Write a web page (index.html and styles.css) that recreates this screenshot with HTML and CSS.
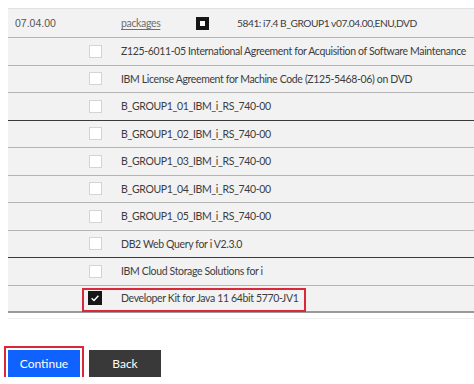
FILE: index.html
```html
<!DOCTYPE html>
<html lang="en">
<head>
<meta charset="utf-8">
<title>Packages</title>
<link rel="stylesheet" href="styles.css">
</head>
<body>
<div class="table">
  <div class="row head">
    <span class="ver">07.04.00</span>
    <a class="pkg" href="#">packages</a>
    <span class="box mixed"></span>
    <span class="desc">5841: i7.4 B_GROUP1 v07.04.00,ENU,DVD</span>
  </div>
  <div class="row item"><span></span><span class="box"></span><span class="label">Z125-6011-05 International Agreement for Acquisition of Software Maintenance</span></div>
  <div class="row item"><span></span><span class="box"></span><span class="label">IBM License Agreement for Machine Code (Z125-5468-06) on DVD</span></div>
  <div class="row item dark"><span></span><span class="box"></span><span class="label">B_GROUP1_01_IBM_i_RS_740-00</span></div>
  <div class="row item"><span></span><span class="box"></span><span class="label">B_GROUP1_02_IBM_i_RS_740-00</span></div>
  <div class="row item"><span></span><span class="box"></span><span class="label">B_GROUP1_03_IBM_i_RS_740-00</span></div>
  <div class="row item"><span></span><span class="box"></span><span class="label">B_GROUP1_04_IBM_i_RS_740-00</span></div>
  <div class="row item"><span></span><span class="box"></span><span class="label">B_GROUP1_05_IBM_i_RS_740-00</span></div>
  <div class="row item dark"><span></span><span class="box"></span><span class="label">DB2 Web Query for i V2.3.0</span></div>
  <div class="row item"><span></span><span class="box"></span><span class="label">IBM Cloud Storage Solutions for i</span></div>
  <div class="row item last">
    <span></span>
    <span class="box checked"><svg viewBox="0 0 14 14" width="14" height="14"><path d="M3.6 7.2 L6 9.4 L10.4 4.8" fill="none" stroke="#fff" stroke-width="1.4"/></svg></span>
    <span class="label">Developer Kit for Java 11 64bit 5770-JV1</span>
    <span class="callout"></span>
  </div>
  <div class="foot"></div>
</div>
<div class="actions">
  <button class="btn primary">Continue</button>
  <button class="btn secondary">Back</button>
</div>
</body>
</html>
```
FILE: styles.css
```css
html, body {
  margin: 0;
  padding: 0;
  background: #ffffff;
}
body {
  font-family: Lato, "Open Sans", sans-serif;
  font-size: 10.5px;
  letter-spacing: -0.35px;
  color: #393939;
}
.table {
  margin: 8px 0 0 8px;
  border-top: 1px solid #dfe3e6;
}
.row {
  display: grid;
  align-items: center;
  background: #f2f2f2;
  border-bottom: 1px solid #b4b4b4;
  position: relative;
}
.head {
  grid-template-columns: 113px 75px 41px 1fr;
  height: 28px;
}
.item {
  grid-template-columns: 81px 32px 1fr;
  height: 26.5px;
}
.item.dark {
  border-bottom-color: #3a3a3a;
}
.item.last {
  border-bottom: 2px solid #9a9a9a;
  height: 25.5px;
}
.ver {
  padding-left: 7px;
  font-family: "Liberation Sans", Arial, sans-serif;
  font-size: 10.5px;
  letter-spacing: 0;
  color: #555555;
}
.pkg {
  color: #6f6f6f;
  text-decoration: underline;
  text-underline-offset: 2px;
}
.desc {
  color: #3d3d3d;
  white-space: nowrap;
  font-size: 10.2px;
  letter-spacing: -0.45px;
}
.label {
  color: #3d3d3d;
  white-space: nowrap;
}
.box {
  width: 13px;
  height: 13px;
  box-sizing: border-box;
  background: #ffffff;
  border: 1px solid #d4d4d4;
  display: block;
}
.box.mixed {
  border: 4px solid #161616;
}
.box.checked {
  width: 14px;
  height: 14px;
  margin-left: -1px;
  background: #161616;
  border: none;
}
.box.checked svg {
  display: block;
}
.callout {
  position: absolute;
  left: 74px;
  top: 2px;
  width: 224px;
  height: 24px;
  box-sizing: border-box;
  border: 2px solid #d9283a;
  pointer-events: none;
}
.foot {
  height: 5px;
  border-bottom: 1px solid #efefef;
}
.actions {
  display: flex;
  gap: 9px;
  margin: 31px 0 0 8px;
}
.btn {
  font-family: Lato, "Open Sans", sans-serif;
  font-size: 12px;
  color: #ffffff;
  border: none;
  height: 27px;
  width: 72px;
  padding: 0;
  cursor: pointer;
}
.primary {
  background: #0f62fe;
  outline: 2px solid #d9283a;
  outline-offset: 2px;
}
.secondary {
  background: #393939;
}
```
